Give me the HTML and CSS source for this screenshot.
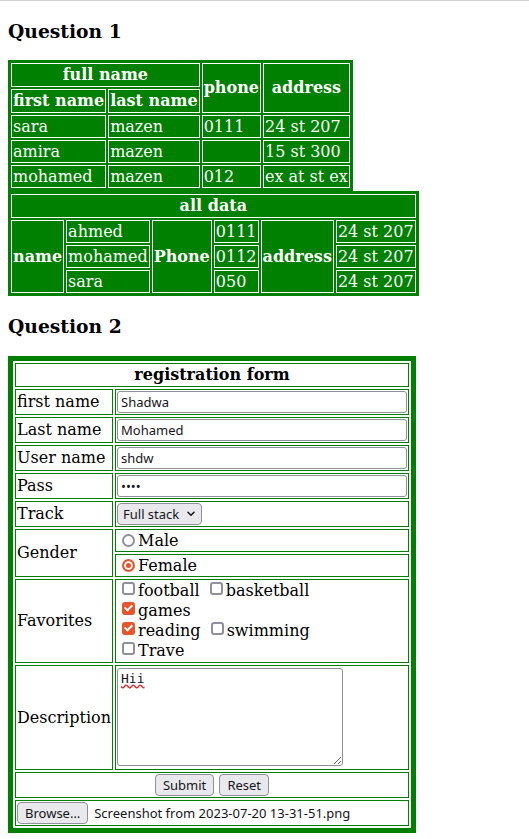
FILE: index.html
```html
<!DOCTYPE html>
<html>
<head>
<meta charset="utf-8">
<title>Tables and Forms</title>
<link rel="stylesheet" href="styles.css">
</head>
<body>
<h3>Question 1</h3>
<table class="data">
  <tr><th colspan="2">full name</th><th rowspan="2">phone</th><th rowspan="2">address</th></tr>
  <tr><th>first name</th><th>last name</th></tr>
  <tr><td>sara</td><td>mazen</td><td>0111</td><td>24 st 207</td></tr>
  <tr><td>amira</td><td>mazen</td><td></td><td>15 st 300</td></tr>
  <tr><td>mohamed</td><td>mazen</td><td>012</td><td>ex at st ex</td></tr>
</table>
<table class="data">
  <tr><th colspan="6">all data</th></tr>
  <tr><th rowspan="3">name</th><td>ahmed</td><th rowspan="3">Phone</th><td>0111</td><th rowspan="3">address</th><td>24 st 207</td></tr>
  <tr><td>mohamed</td><td>0112</td><td>24 st 207</td></tr>
  <tr><td>sara</td><td>050</td><td>24 st 207</td></tr>
</table>
<h3>Question 2</h3>
<form class="regform">
<table class="reg">
  <tr><th colspan="2" class="title">registration form</th></tr>
  <tr><td class="lbl">first name</td><td><input class="field" type="text" value="Shadwa"></td></tr>
  <tr><td class="lbl">Last name</td><td><input class="field" type="text" value="Mohamed"></td></tr>
  <tr><td class="lbl">User name</td><td><input class="field" type="text" value="shdw"></td></tr>
  <tr><td class="lbl">Pass</td><td><input class="field" type="password" value="abcd"></td></tr>
  <tr><td class="lbl">Track</td><td><div class="sel-wrap"><select class="sel"><option>Full stack</option></select><svg class="chev" width="8" height="6" viewBox="0 0 8 6"><path d="M1 1.3 L4 4.3 L7 1.3" fill="none" stroke="#15141a" stroke-width="1.5" stroke-linecap="round" stroke-linejoin="round"/></svg></div></td></tr>
  <tr><td class="lbl" rowspan="2">Gender</td><td><input class="rad" type="radio" name="g">Male</td></tr>
  <tr><td><input class="rad" type="radio" name="g" checked>Female</td></tr>
  <tr><td class="lbl">Favorites</td><td class="favs"><input class="chk" type="checkbox">football <input class="chk" type="checkbox">basketball<br><input class="chk" type="checkbox" checked>games<br><input class="chk" type="checkbox" checked>reading <input class="chk" type="checkbox">swimming<br><input class="chk" type="checkbox">Trave</td></tr>
  <tr><td class="lbl">Description</td><td><textarea class="desc">Hii</textarea></td></tr>
  <tr><td colspan="2" class="actions"><button type="button" class="btn">Submit</button> <button type="button" class="btn">Reset</button></td></tr>
  <tr><td colspan="2"><div class="file"><button type="button" class="btn">Browse…</button><span class="fname">Screenshot from 2023-07-20 13-31-51.png</span></div></td></tr>
</table>
</form>
</body>
</html>
```
FILE: styles.css
```css
html {
  border-top: 1px solid #d2d2d2;
  background: #fff;
}
body {
  margin: 0 8px 8px;
  font-family: "DejaVu Serif", serif;
  font-size: 16px;
  color: #000;
}
h3 {
  font-size: 18.72px;
  font-weight: bold;
  margin: 18.72px 0;
}
.data {
  background: #008000;
  color: #fff;
  border: 1px solid #008000;
  border-spacing: 2px;
}
.data th,
.data td {
  border: 1px solid #fff;
  padding: 1px;
  line-height: 19px;
}
.data th {
  line-height: 20px;
}
.data td {
  text-align: left;
}
.regform {
  margin: 0;
}
.reg {
  border: 5px solid #008000;
  border-spacing: 2px;
  width: 408px;
}
.reg th,
.reg td {
  border: 1px solid #008000;
  padding: 1px;
  line-height: 19px;
  text-align: left;
}
.reg th {
  line-height: 20px;
}
.reg .title {
  text-align: center;
}
.reg .lbl {
  width: 94px;
}
.reg .favs {
  line-height: 20px;
}
.reg .actions {
  text-align: center;
}
.field {
  display: block;
  box-sizing: border-box;
  width: 100%;
  height: 22px;
  margin: 0;
  padding: 0 3px;
  border: 1px solid #8f8f9d;
  border-radius: 3px;
  background: #fff;
  font: 13px "Noto Sans", sans-serif;
  color: #15141a;
}
.sel-wrap {
  display: flex;
  align-items: center;
}
.sel {
  appearance: none;
  box-sizing: border-box;
  width: 85px;
  height: 22px;
  margin: 0;
  padding: 0 0 0 5px;
  border: 1px solid #8f8f9d;
  border-radius: 4px;
  background: #e9e9ed;
  font: 13px "Noto Sans", sans-serif;
  color: #15141a;
}
.chev {
  margin-left: -15px;
  pointer-events: none;
}
.rad {
  appearance: none;
  box-sizing: border-box;
  width: 13px;
  height: 13px;
  margin: 0 3px 0 5px;
  border: 2px solid #8f8f9d;
  border-radius: 50%;
  background: #fff;
  vertical-align: -1px;
}
.rad:checked {
  border-color: #e5542b;
  background: #e5542b;
  box-shadow: inset 0 0 0 2px #fff;
}
.chk {
  appearance: none;
  box-sizing: border-box;
  position: relative;
  width: 13px;
  height: 13px;
  margin: 0 3px 0 5px;
  border: 2px solid #8f8f9d;
  border-radius: 3px;
  background: #fff;
  vertical-align: 1px;
}
.chk:checked {
  border-color: #e5542b;
  background: #e5542b;
}
.chk:checked::after {
  content: "";
  position: absolute;
  left: 2px;
  top: -0.5px;
  width: 3px;
  height: 6px;
  border: solid #fff;
  border-width: 0 2px 2px 0;
  transform: rotate(45deg);
}
.desc {
  display: block;
  box-sizing: border-box;
  width: 226px;
  height: 98px;
  margin: 1px 0 2px;
  padding: 2px 3px;
  border: 1px solid #8f8f9d;
  border-radius: 3px;
  font: 13px "DejaVu Sans Mono", monospace;
  color: #15141a;
  text-decoration: underline wavy #e02020;
  resize: both;
}
.btn {
  box-sizing: border-box;
  height: 22px;
  margin: 0;
  padding: 0 7px;
  border: 1px solid #8f8f9d;
  border-radius: 4px;
  background: #e9e9ed;
  font: 13px "Noto Sans", sans-serif;
  color: #15141a;
  vertical-align: top;
}
.file {
  display: flex;
  align-items: center;
  gap: 6px;
}
.fname {
  font: 13px "Noto Sans", sans-serif;
  color: #15141a;
}
```
